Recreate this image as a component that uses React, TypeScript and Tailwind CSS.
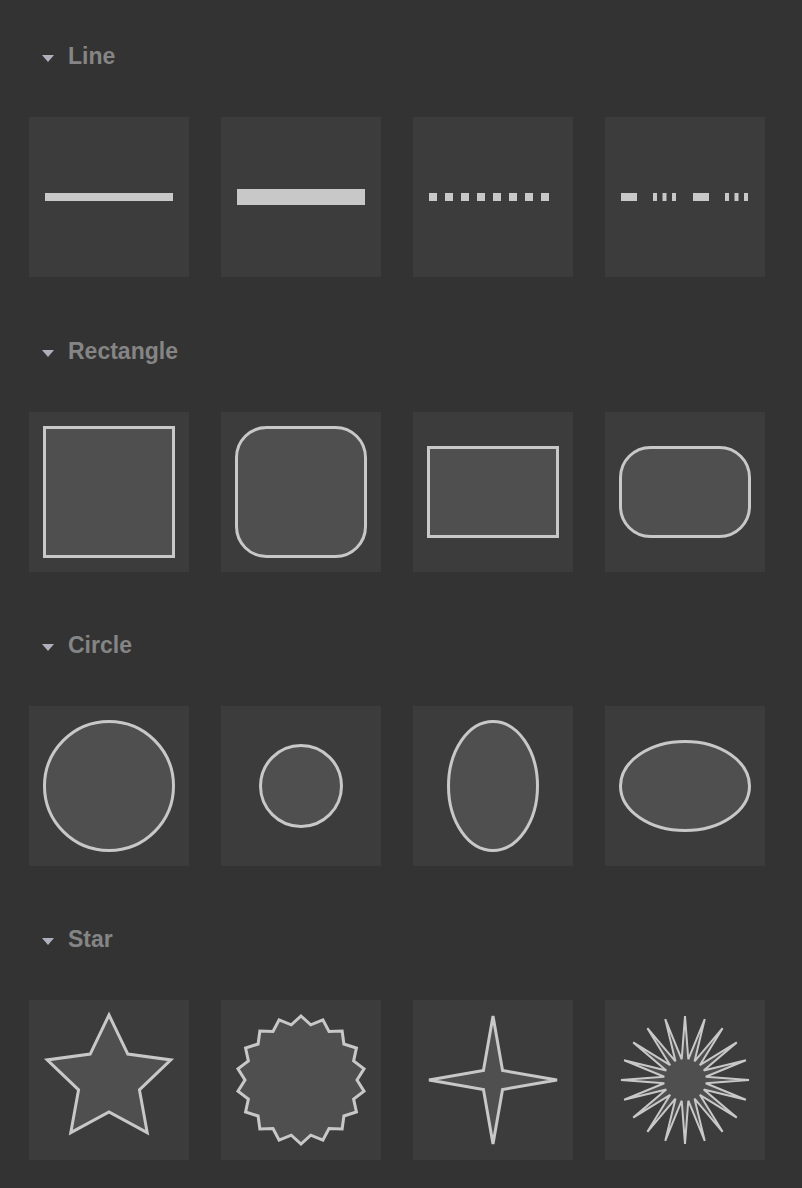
const STROKE = '#c8c8c8';
const FILL = '#4f4f4f';

const starPoints = (n: number, outer: number, inner: number) => {
    const pts: string[] = [];
    for (let i = 0; i < n * 2; i++) {
        const r = i % 2 === 0 ? outer : inner;
        const a = -Math.PI / 2 + (i * Math.PI) / n;
        pts.push(`${(80 + r * Math.cos(a)).toFixed(2)},${(80 + r * Math.sin(a)).toFixed(2)}`);
    }
    return pts.join(' ');
};

const shapes: Record<string, React.ReactNode[]> = {
    Line: [
        <rect key="l1" x="16" y="76" width="128" height="8" fill={STROKE} />,
        <rect key="l2" x="16" y="72" width="128" height="16" fill={STROKE} />,
        <line key="l3" x1="16" y1="80" x2="144" y2="80" stroke={STROKE} strokeWidth="8" strokeDasharray="8 8" />,
        <line key="l4" x1="16" y1="80" x2="144" y2="80" stroke={STROKE} strokeWidth="8" strokeDasharray="16 16 4 5.5 4 5.5 4 17" />,
    ],
    Rectangle: [
        <rect key="r1" x="15.5" y="15.5" width="129" height="129" fill={FILL} stroke={STROKE} strokeWidth="3" />,
        <rect key="r2" x="15.5" y="15.5" width="129" height="129" rx="30" fill={FILL} stroke={STROKE} strokeWidth="3" />,
        <rect key="r3" x="15.5" y="35.5" width="129" height="89" fill={FILL} stroke={STROKE} strokeWidth="3" />,
        <rect key="r4" x="15.5" y="35.5" width="129" height="89" rx="30" fill={FILL} stroke={STROKE} strokeWidth="3" />,
    ],
    Circle: [
        <circle key="c1" cx="80" cy="80" r="64.5" fill={FILL} stroke={STROKE} strokeWidth="3" />,
        <circle key="c2" cx="80" cy="80" r="40.5" fill={FILL} stroke={STROKE} strokeWidth="3" />,
        <ellipse key="c3" cx="80" cy="80" rx="44.5" ry="64.5" fill={FILL} stroke={STROKE} strokeWidth="3" />,
        <ellipse key="c4" cx="80" cy="80" rx="64.5" ry="44.5" fill={FILL} stroke={STROKE} strokeWidth="3" />,
    ],
    Star: [
        <polygon key="s1" points={starPoints(5, 65, 32)} fill={FILL} stroke={STROKE} strokeWidth="3" />,
        <polygon key="s2" points={starPoints(18, 64, 56)} fill={FILL} stroke={STROKE} strokeWidth="3" />,
        <polygon key="s3" points={starPoints(4, 64, 13.5)} fill={FILL} stroke={STROKE} strokeWidth="3" />,
        <polygon key="s4" points={starPoints(20, 64, 21)} fill={FILL} stroke={STROKE} strokeWidth="2" />,
    ],
};

const App: React.FC = () => {
    return (
        <div className="min-h-[1188px] w-full bg-[#333333] pl-[29px] pt-[36px] pb-[28px]" style={{ fontFamily: '"Liberation Sans", Arial, sans-serif' }}>
            <div className="flex flex-col gap-[53px]">
                {Object.keys(shapes).map((group, idx) => (
                    <section key={group} className={idx === 0 ? 'mb-px' : ''}>
                        <div className="flex h-10 items-center gap-[14px] pl-[13px]">
                            <svg width="12" height="7" viewBox="0 0 12 7" className="mt-[5px]">
                                <polygon points="0,0 12,0 6,7" fill="#aeb1bb" />
                            </svg>
                            <h2 className="text-[23px] font-bold text-[#858585]">{group}</h2>
                        </div>
                        <div className="mt-[41px] grid w-max grid-cols-4 gap-8">
                            {shapes[group].map((shape, i) => (
                                <div key={i} className="h-40 w-40 bg-[#3c3c3c]">
                                    <svg width="160" height="160" viewBox="0 0 160 160">
                                        {shape}
                                    </svg>
                                </div>
                            ))}
                        </div>
                    </section>
                ))}
            </div>
        </div>
    );
};

export default App;
